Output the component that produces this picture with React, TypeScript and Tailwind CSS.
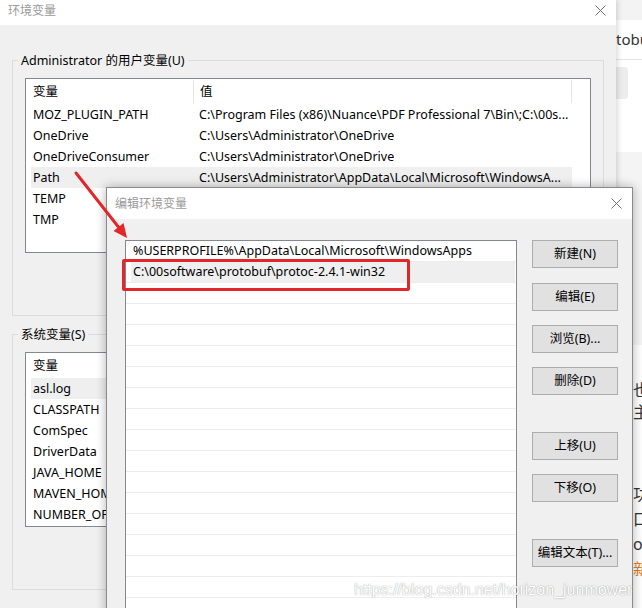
import React from "react";

const USER_VARS: [string, string][] = [
  ["MOZ_PLUGIN_PATH", "C:\\Program Files (x86)\\Nuance\\PDF Professional 7\\Bin\\;C:\\00s..."],
  ["OneDrive", "C:\\Users\\Administrator\\OneDrive"],
  ["OneDriveConsumer", "C:\\Users\\Administrator\\OneDrive"],
  ["Path", "C:\\Users\\Administrator\\AppData\\Local\\Microsoft\\WindowsA..."],
  ["TEMP", "%USERPROFILE%\\AppData\\Local\\Temp"],
  ["TMP", "%USERPROFILE%\\AppData\\Local\\Temp"],
];

const SYS_VARS: [string, string][] = [
  ["asl.log", "Destination=file"],
  ["CLASSPATH", ".;%JAVA_HOME%\\lib"],
  ["ComSpec", "C:\\Windows\\system32\\cmd.exe"],
  ["DriverData", "C:\\Windows\\System32\\Drivers\\DriverData"],
  ["JAVA_HOME", "C:\\Program Files\\Java\\jdk1.8.0"],
  ["MAVEN_HOME", "C:\\00software\\apache-maven"],
  ["NUMBER_OF_PROCESSORS", "8"],
];

const PATHS = [
  "%USERPROFILE%\\AppData\\Local\\Microsoft\\WindowsApps",
  "C:\\00software\\protobuf\\protoc-2.4.1-win32",
];

const BUTTONS: { label: string; gap: string }[] = [
  { label: "新建(N)", gap: "mt-0" },
  { label: "编辑(E)", gap: "mt-[15px]" },
  { label: "浏览(B)...", gap: "mt-[14px]" },
  { label: "删除(D)", gap: "mt-[14px]" },
  { label: "上移(U)", gap: "mt-[37px]" },
  { label: "下移(O)", gap: "mt-[14px]" },
  { label: "编辑文本(T)...", gap: "mt-[37px]" },
];

function CloseX() {
  return (
    <svg width="11" height="11" viewBox="0 0 11 11" className="block">
      <path d="M0.5 0.5L10.5 10.5M10.5 0.5L0.5 10.5" stroke="#6e6e6e" strokeWidth="1" fill="none" />
    </svg>
  );
}

function VarList({ rows, selected }: { rows: [string, string][]; selected: number }) {
  return (
    <div className="ml-[12px] h-[175px] w-[566px] border border-[#828790] bg-white">
      <div className="flex h-[25px] items-center">
        <div className="flex h-[23px] w-[168px] items-center border-r border-[#e5e5e5] pl-[7px] pt-[1px]">变量</div>
        <div className="flex h-[23px] w-[378px] items-center border-r border-[#e5e5e5] pl-[6px] pt-[1px]">值</div>
      </div>
      {rows.map(([name, value], i) => (
        <div
          key={name}
          className={
            "ml-[5px] flex h-[21px] w-[541px] items-center whitespace-nowrap pt-[1px] " +
            (i === selected ? "bg-[#efefef]" : "")
          }
        >
          <span className="w-[168px] overflow-hidden pl-[2px]">{name}</span>
          <span className="overflow-hidden">{value}</span>
        </div>
      ))}
    </div>
  );
}

export default function App() {
  return (
    <div className="relative h-[608px] w-[642px] overflow-hidden bg-white font-['Noto_Sans','Noto_Sans_CJK_SC',sans-serif] text-[12.5px] text-black">
      {/* browser page peeking out on the right */}
      <div className="absolute left-[600px] top-0 flex h-full w-[42px] flex-col bg-white pl-[16px]">
        <div className="-ml-[16px] h-[20px] shrink-0 bg-[#f3f3f3]" />
        <div className="flex h-[40px] shrink-0 items-center border-b border-[#e4e4e4] text-[15px] text-[#333]">tobu</div>
        <div className="mt-[7px] h-[32px] w-[12px] shrink-0 rounded-r-[4px] bg-[#ececec]" />
        <div className="h-[53px] shrink-0" />
        <div className="-ml-[16px] h-[193px] shrink-0 bg-[#f4f4f4]" />
        <div className="flex flex-col pl-[17px] text-[16px] leading-[22px] text-[#333]">
          <span className="mt-[34px]">也</span>
          <span>主</span>
          <span className="mt-[59px] leading-[25px]">功</span>
          <span className="leading-[25px]">口</span>
          <span className="leading-[25px]">o</span>
          <span className="leading-[25px] text-[#e07b2a]">新</span>
        </div>
      </div>

      {/* 环境变量 window */}
      <div className="absolute left-0 top-0 flex h-[608px] w-[616px] flex-col bg-[#f0f0f0] shadow-[1px_0_6px_rgba(0,0,0,0.18)]">
        <div className="flex h-[25px] shrink-0 items-center justify-between bg-white pb-[4px] pl-[8px] pr-[10px]">
          <span className="text-[12px] text-[#9a9a9a]">环境变量</span>
          <CloseX />
        </div>
        <div className="px-[12px] pt-[27px]">
          <fieldset className="h-[264px] w-[592px] border border-[#dcdcdc]">
            <legend className="ml-[5px] px-[3px] leading-[17px]">Administrator 的用户变量(U)</legend>
            <div className="mt-[9px]">
              <VarList rows={USER_VARS} selected={3} />
            </div>
          </fieldset>
          <fieldset className="mt-[10px] h-[264px] w-[592px] border border-[#dcdcdc]">
            <legend className="ml-[5px] px-[3px] leading-[17px]">系统变量(S)</legend>
            <div className="mt-[9px]">
              <VarList rows={SYS_VARS} selected={0} />
            </div>
          </fieldset>
        </div>
      </div>

      {/* 编辑环境变量 dialog */}
      <div className="absolute left-[106px] top-[187px] flex h-[470px] w-[527px] flex-col border border-[#8a8a8a] bg-[#f0f0f0] shadow-[0_0_10px_rgba(0,0,0,0.3)]">
        <div className="flex h-[31px] shrink-0 items-center justify-between bg-white pl-[8px] pr-[10px]">
          <span className="text-[12px] text-[#9a9a9a]">编辑环境变量</span>
          <CloseX />
        </div>
        <div className="flex shrink-0 pl-[18px] pt-[21px]">
          <div className="h-[400px] w-[392px] border border-[#828790] bg-white">
            {Array.from({ length: 18 }).map((_, i) => (
              <div key={i} className="h-[21px] border-b border-[#ededed]">
                {i < PATHS.length && (
                  <div
                    className={
                      "ml-[5px] mr-[1px] flex h-[20px] items-center whitespace-nowrap pl-[2px] pt-[1px] " +
                      (i === 1 ? "bg-[#efefef]" : "")
                    }
                  >
                    {PATHS[i]}
                  </div>
                )}
              </div>
            ))}
          </div>
          <div className="ml-[15px] flex w-[86px] flex-col">
            {BUTTONS.map((b) => (
              <div
                key={b.label}
                className={
                  "flex h-[28px] items-center justify-center border border-[#adadad] bg-[#e1e1e1] " + b.gap
                }
              >
                {b.label}
              </div>
            ))}
          </div>
        </div>
      </div>

      {/* red annotation box */}
      <div className="absolute left-[122px] top-[259px] h-[32px] w-[288px] rounded-[2px] border-[3px] border-[#e3262a]" />

      {/* red arrow */}
      <svg className="absolute left-0 top-0" width="642" height="608" viewBox="0 0 642 608">
        <line x1="76" y1="173" x2="120" y2="229" stroke="#e3262a" strokeWidth="3" strokeLinecap="round" />
        <polygon points="127,238 113.5,231 123.5,223" fill="#e3262a" />
      </svg>

      {/* watermark */}
      <div className="absolute left-[354px] top-[579px] font-['Liberation_Sans',Arial,sans-serif] text-[16px] leading-[22px] text-white [text-shadow:0_0_1px_rgba(0,0,0,0.35),0_0_2px_rgba(0,0,0,0.15)]">
        https://blog.csdn.net/horizon_junmower
      </div>
    </div>
  );
}
